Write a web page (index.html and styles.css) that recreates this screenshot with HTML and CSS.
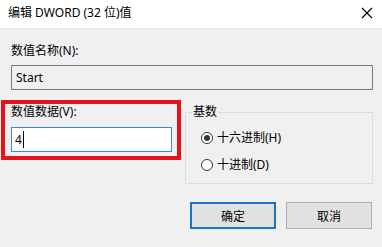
FILE: index.html
```html
<!DOCTYPE html>
<html lang="zh-CN">
<head>
<meta charset="utf-8">
<title>编辑 DWORD (32 位)值</title>
<link rel="stylesheet" href="styles.css">
</head>
<body>
<div class="dialog">
  <div class="titlebar">
    <span class="title">编辑 DWORD (32 位)值</span>
    <svg class="close" width="12" height="12" viewBox="0 0 12 12"><path d="M1 1L11 11M11 1L1 11" stroke="#000" stroke-width="1.1" fill="none"/></svg>
  </div>
  <div class="content">
    <div class="name-section">
      <div class="label">数值名称(N):</div>
      <div class="field readonly">Start</div>
    </div>
    <div class="lower">
      <div class="redbox">
        <div class="label">数值数据(V):</div>
        <div class="field focused"><span>4</span><span class="caret"></span></div>
      </div>
      <fieldset class="group">
        <legend>基数</legend>
        <div class="radio-row first"><span class="radio checked"></span><span>十六进制(H)</span></div>
        <div class="radio-row"><span class="radio"></span><span>十进制(D)</span></div>
      </fieldset>
    </div>
    <div class="buttons">
      <div class="btn default">确定</div>
      <div class="btn">取消</div>
    </div>
  </div>
</div>
</body>
</html>
```
FILE: styles.css
```css
html, body {
  margin: 0;
  padding: 0;
}
body {
  width: 382px;
  height: 247px;
  background: #f0f0f0;
  font-family: "Noto Sans", "Noto Sans CJK SC", sans-serif;
  font-size: 12px;
  color: #000;
  overflow: hidden;
}
.dialog {
  width: 382px;
  height: 247px;
  background: #f0f0f0;
}
.titlebar {
  height: 29px;
  background: #fff;
  border-bottom: 1px solid #e8e8e8;
  display: flex;
  align-items: center;
  justify-content: space-between;
  padding: 0 8px 0 8px;
  box-sizing: border-box;
}
.title {
  font-size: 12px;
  line-height: 16px;
  margin-top: -2px;
}
.close {
  margin-right: 1px;
  margin-top: -3px;
}
.content {
  padding: 0 9px 0 1px;
}
.name-section {
  padding-left: 10px;
  padding-top: 14px;
}
.label {
  line-height: 16px;
  height: 16px;
}
.field {
  box-sizing: border-box;
  height: 25px;
  line-height: 23px;
  padding-left: 4px;
  display: flex;
  align-items: center;
}
.readonly {
  margin-top: 6px;
  border: 1px solid #7a7a7a;
  background: #f0f0f0;
}
.lower {
  display: flex;
  align-items: flex-start;
  margin-top: 10px;
}
.redbox {
  width: 180px;
  box-sizing: border-box;
  border: 4px solid #e3121b;
  padding: 0 5px 4px 6px;
}
.focused {
  margin-top: 7px;
  border: 1px solid #3b8db8;
  background: #fff;
  padding-left: 3px;
}
.caret {
  display: inline-block;
  width: 0;
  height: 17px;
  border-left: 1px solid #000;
  margin-left: 1px;
}
.group {
  margin: 4px 0 0 4px;
  width: 188px;
  box-sizing: border-box;
  border: 1px solid #dcdcdc;
  padding: 0 6px 10px 6px;
  min-width: 0;
}
.group legend {
  padding: 0 1px;
  line-height: 16px;
}
.radio-row {
  display: flex;
  align-items: center;
  height: 16px;
  line-height: 16px;
  padding-left: 9px;
  margin-top: 11px;
}
.radio-row.first {
  margin-top: 10px;
}
.radio {
  width: 12px;
  height: 12px;
  box-sizing: border-box;
  border: 1px solid #333;
  border-radius: 50%;
  background: #fff;
  margin-right: 4px;
  display: flex;
  align-items: center;
  justify-content: center;
}
.radio.checked::after {
  content: "";
  width: 6px;
  height: 6px;
  border-radius: 50%;
  background: #333;
}
.buttons {
  display: flex;
  justify-content: flex-end;
  gap: 10px;
  margin-top: 18px;
  padding-right: 1px;
}
.btn {
  width: 86px;
  height: 27px;
  box-sizing: border-box;
  border: 1px solid #adadad;
  background: #e1e1e1;
  display: flex;
  align-items: center;
  justify-content: center;
}
.btn.default {
  border: 2px solid #1a74c6;
}
```
